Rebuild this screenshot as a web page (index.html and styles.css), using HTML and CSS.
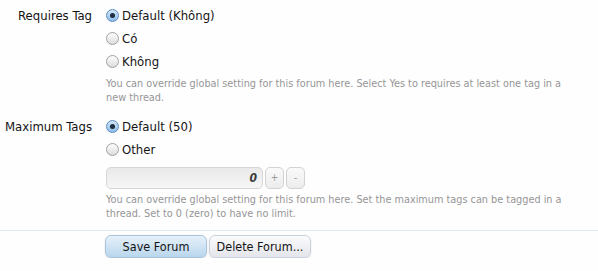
FILE: index.html
```html
<!DOCTYPE html>
<html lang="vi">

<head>
    <meta charset="UTF-8">
    <meta name="viewport" content="width=device-width, initial-scale=1.0">
    <title>Forum options</title>
    <link rel="stylesheet" href="styles.css">
</head>

<body>
    <form class="options">
        <div class="row">
            <div class="label">Requires Tag</div>
            <div class="field">
                <label class="choice"><span class="radio checked"></span>Default (Không)</label>
                <label class="choice"><span class="radio"></span>Có</label>
                <label class="choice"><span class="radio"></span>Không</label>
                <p class="hint">You can override global setting for this forum here. Select Yes to requires at least one tag in a new thread.</p>
            </div>
        </div>

        <div class="row second">
            <div class="label">Maximum Tags</div>
            <div class="field">
                <label class="choice"><span class="radio checked"></span>Default (50)</label>
                <label class="choice"><span class="radio"></span>Other</label>
                <div class="spin">
                    <div class="number">0</div>
                    <span class="step">+</span>
                    <span class="step">-</span>
                </div>
                <p class="hint">You can override global setting for this forum here. Set the maximum tags can be tagged in a thread. Set to 0 (zero) to have no limit.</p>
            </div>
        </div>

        <div class="submit">
            <button type="button" class="btn primary">Save Forum</button>
            <button type="button" class="btn">Delete Forum...</button>
        </div>
    </form>
</body>

</html>
```

FILE: styles.css
```css
* {
    box-sizing: border-box;
}

body {
    margin: 0;
    background-color: #fefeff;
    font-family: "DejaVu Sans Condensed", "DejaVu Sans", sans-serif;
    font-size: 13px;
    color: #141414;
}

.options {
    padding-top: 4px;
}

.row {
    display: flex;
    align-items: flex-start;
}

.row.second {
    margin-top: 11px;
}

.label {
    width: 92px;
    text-align: right;
    padding-top: 4px;
    line-height: 15px;
}

.field {
    padding-left: 14px;
    width: 470px;
}

.choice {
    display: flex;
    align-items: center;
    height: 23px;
    line-height: 15px;
}

.radio {
    width: 13px;
    height: 13px;
    border-radius: 50%;
    border: 1px solid #a2a2a2;
    background: linear-gradient(#fdfdfd, #dcdcdc);
    margin-right: 3px;
    display: inline-flex;
    align-items: center;
    justify-content: center;
}

.radio.checked {
    border-color: #5a8dc2;
    background: linear-gradient(#d3e6f8, #8fbce6);
}

.radio.checked::after {
    content: "";
    width: 5px;
    height: 5px;
    border-radius: 50%;
    background-color: #1c2d44;
}

.hint {
    margin: 4px 0 0;
    font-size: 10.8px;
    line-height: 13.5px;
    color: #969696;
}

.spin {
    display: flex;
    margin-top: 6px;
}

.number {
    width: 157px;
    height: 22px;
    border: 1px solid #d6d6d6;
    border-radius: 5px;
    background: linear-gradient(#e9e9e9, #f6f6f6);
    text-align: right;
    padding-right: 5px;
    font-style: italic;
    font-weight: bold;
    font-size: 12px;
    line-height: 20px;
    color: #3a3a3a;
}

.step {
    width: 19px;
    height: 22px;
    margin-left: 2px;
    border: 1px solid #d2d2d2;
    border-radius: 5px;
    background: linear-gradient(#fafafa, #ececec);
    text-align: center;
    font-size: 10px;
    line-height: 20px;
    color: #999;
}

.submit {
    margin-top: 10px;
    border-top: 1px solid #dde9f4;
    padding: 4px 0 0 105px;
    display: flex;
    gap: 2px;
}

.btn {
    font-family: inherit;
    font-size: 12.5px;
    color: #141414;
    width: 102px;
    height: 23px;
    padding: 0;
    white-space: nowrap;
    border: 1px solid #c9d3dd;
    border-radius: 6px;
    background: linear-gradient(#fbfbfd, #e3e5ea);
    box-shadow: 0 1px 2px rgba(0, 0, 0, 0.12);
}

.btn.primary {
    border-color: #aac4dc;
    background: linear-gradient(#e6f1fa, #b9d6ec);
}
```
